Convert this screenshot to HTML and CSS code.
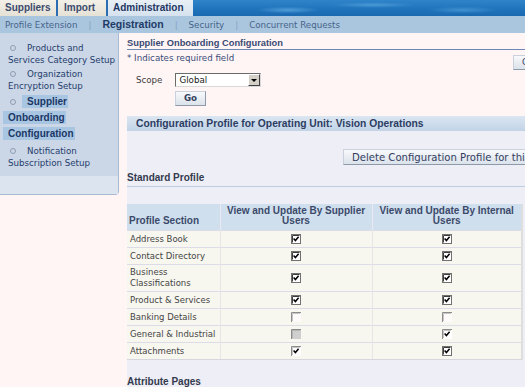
FILE: index.html
```html
<!DOCTYPE html>
<html lang="en">
<head>
<meta charset="utf-8">
<title>Supplier Onboarding Configuration</title>
<link rel="stylesheet" href="styles.css">
</head>
<body>
<svg class="defs" width="0" height="0" aria-hidden="true">
  <defs>
    <symbol id="cb-on" viewBox="0 0 10 10">
      <rect x="0.5" y="0.5" width="9" height="9" fill="#fff" stroke="#707070"/>
      <path d="M1.5 8.5V1.5h7" fill="none" stroke="#3c3c3c"/>
      <path d="M2.6 4.6l1.8 2 3.2-3.8" fill="none" stroke="#000" stroke-width="1.5"/>
    </symbol>
    <symbol id="cb-off" viewBox="0 0 10 10">
      <rect x="0" y="0" width="10" height="10" fill="#fffafa"/>
      <path d="M0.5 10V0.5H10" fill="none" stroke="#8c8c8c"/>
      <path d="M1.5 9V1.5H9" fill="none" stroke="#c4c4c4"/>
    </symbol>
    <symbol id="cb-dis" viewBox="0 0 10 10">
      <rect x="0" y="0" width="10" height="10" fill="#cfcfcf"/>
      <path d="M0.5 10V0.5H10" fill="none" stroke="#8c8c8c"/>
      <path d="M1.5 9V1.5H9" fill="none" stroke="#b4b4b4"/>
    </symbol>
    <symbol id="cb-don" viewBox="0 0 10 10">
      <rect x="0" y="0" width="10" height="10" fill="#fff"/>
      <path d="M0.5 10V0.5H10" fill="none" stroke="#8c8c8c"/>
      <path d="M1.5 9V1.5H9" fill="none" stroke="#c4c4c4"/>
      <path d="M2.6 4.6l1.8 2 3.2-3.8" fill="none" stroke="#000" stroke-width="1.5"/>
    </symbol>
  </defs>
</svg>

<header class="tabs">
  <div class="tab tab-suppliers">Suppliers</div>
  <div class="tab tab-import">Import</div>
  <div class="tab tab-admin">Administration</div>
  <div class="tab-fill"></div>
</header>

<nav class="subtabs">
  <span class="sub">Profile Extension</span><span class="sep">|</span><span class="sub sub-on">Registration</span><span class="sep">|</span><span class="sub">Security</span><span class="sep">|</span><span class="sub">Concurrent Requests</span>
</nav>

<div class="page">
  <aside class="side">
    <ul class="side-list">
      <li><span class="dot"></span>Products and Services Category Setup</li>
      <li><span class="dot"></span>Organization Encryption Setup</li>
      <li class="cur"><span class="dot"></span><span class="hl">Supplier Onboarding Configuration</span></li>
      <li><span class="dot"></span>Notification Subscription Setup</li>
    </ul>
    <div class="side-foot"></div>
  </aside>

  <main class="content">
    <h1 class="title">Supplier Onboarding Configuration</h1>
    <div class="req-row">
      <span class="req">* Indicates required field</span>
      <div class="top-btns">
        <button class="btn">Cancel</button>
        <button class="btn">Apply</button>
      </div>
    </div>
    <div class="scope-row">
      <span class="scope-label">Scope</span>
      <div class="select"><span class="select-val">Global</span><span class="select-arrow"><span class="tri"></span></span></div>
    </div>
    <div class="go-row"><button class="btn btn-go">Go</button></div>

    <section class="config">
      <h2 class="config-head">Configuration Profile for Operating Unit: Vision Operations</h2>
      <div class="delete-row"><button class="btn btn-wide">Delete Configuration Profile for this Operating Unit</button></div>
      <h3 class="sec-head">Standard Profile</h3>
      <table class="grid">
        <colgroup><col class="c1"><col class="c2"><col class="c3"></colgroup>
        <thead>
          <tr><th class="th-name">Profile Section</th><th>View and Update By Supplier Users</th><th>View and Update By Internal Users</th></tr>
        </thead>
        <tbody>
          <tr><td>Address Book</td><td class="ck"><svg class="cb"><use href="#cb-on"/></svg></td><td class="ck"><svg class="cb"><use href="#cb-on"/></svg></td></tr>
          <tr><td>Contact Directory</td><td class="ck"><svg class="cb"><use href="#cb-on"/></svg></td><td class="ck"><svg class="cb"><use href="#cb-on"/></svg></td></tr>
          <tr><td>Business Classifications</td><td class="ck"><svg class="cb"><use href="#cb-on"/></svg></td><td class="ck"><svg class="cb"><use href="#cb-on"/></svg></td></tr>
          <tr><td>Product &amp; Services</td><td class="ck"><svg class="cb"><use href="#cb-on"/></svg></td><td class="ck"><svg class="cb"><use href="#cb-on"/></svg></td></tr>
          <tr><td>Banking Details</td><td class="ck"><svg class="cb"><use href="#cb-off"/></svg></td><td class="ck"><svg class="cb"><use href="#cb-off"/></svg></td></tr>
          <tr><td>General &amp; Industrial</td><td class="ck"><svg class="cb"><use href="#cb-dis"/></svg></td><td class="ck"><svg class="cb"><use href="#cb-don"/></svg></td></tr>
          <tr><td>Attachments</td><td class="ck"><svg class="cb"><use href="#cb-don"/></svg></td><td class="ck"><svg class="cb"><use href="#cb-on"/></svg></td></tr>
        </tbody>
      </table>
      <h3 class="sec-head sec-attr">Attribute Pages</h3>
    </section>
  </main>
</div>
</body>
</html>
```
FILE: styles.css
```css
* { box-sizing: border-box; }
html, body { margin: 0; padding: 0; }
body {
  width: 525px;
  height: 387px;
  overflow: hidden;
  background: #fff5f5;
  font-family: "DejaVu Sans", Verdana, sans-serif;
  font-size: 8.7px;
  color: #3d3d3d;
}
.defs { position: absolute; width: 0; height: 0; overflow: hidden; }

/* ---------- top tabs ---------- */
.tabs { display: flex; height: 16px; }
.tab {
  font-family: "Liberation Sans", Arial, sans-serif;
  font-weight: bold;
  font-size: 10px;
  line-height: 16px;
  color: #3b4b6e;
  background: linear-gradient(#f3f0e8, #e5e1d5);
  white-space: nowrap;
  flex: none;
}
.tab-suppliers { width: 56px; padding-left: 5px; }
.tab-import { width: 50px; padding-left: 6px; border-left: 2px solid #2b6db2; }
.tab-admin {
  width: 87px; padding-left: 5px;
  border-left: 2px solid #2b6db2;
  background: linear-gradient(#e9f0f6, #d5e2ee);
  color: #1f3662;
}
.tab-fill {
  flex: 1;
  background:
    radial-gradient(ellipse 45px 5px at 95px 10px, rgba(120, 190, 238, .55), transparent 70%),
    radial-gradient(ellipse 60px 4px at 180px 5px, rgba(120, 190, 238, .45), transparent 70%),
    radial-gradient(ellipse 50px 5px at 270px 10px, rgba(120, 190, 238, .4), transparent 70%),
    linear-gradient(180deg, #2f84c9 0%, #1f74bc 55%, #1a69b0 100%);
}

/* ---------- sub tabs ---------- */
.subtabs {
  height: 17px;
  line-height: 17px;
  background: #a9c6de;
  padding-left: 5px;
  color: #47648c;
  white-space: nowrap;
}
.sub-on {
  font-family: "Liberation Sans", Arial, sans-serif;
  font-weight: bold;
  font-size: 10.5px;
  color: #1f3a66;
}
.sep { color: #86a2c2; margin: 0 11px; }

/* ---------- page ---------- */
.page { display: flex; align-items: flex-start; }

.side {
  flex: none;
  width: 119px;
  background: #cbd6e6;
  border-right: 1px solid #a7bad1;
  border-bottom: 1px solid #a7bad1;
  border-bottom-right-radius: 4px;
  color: #25406d;
}
.side-list { list-style: none; margin: 0; padding: 9px 0 0; }
.side-list li { padding-left: 8px; line-height: 12px; margin-bottom: 2px; }
.side-list li.cur { padding-left: 3px; line-height: 16px; margin: 1px 0 3px; }
.dot {
  display: inline-block;
  width: 6px; height: 6px;
  border: 1px solid #8f9db2;
  border-radius: 50%;
  margin: 0 11px 1px 2px;
  vertical-align: middle;
}
.cur .dot { margin-left: 7px; margin-right: 6px; }
.hl {
  font-family: "Liberation Sans", Arial, sans-serif;
  font-weight: bold;
  font-size: 10px;
  color: #1b3766;
  background: #a8c6e2;
  padding: 1px 1px 1px 5px;
  -webkit-box-decoration-break: clone;
  box-decoration-break: clone;
}
.side-foot { height: 18px; margin-top: 7px; background: #dce4ef; }

/* ---------- content ---------- */
.content { flex: none; width: 500px; margin-left: 8px; padding-top: 4px; }

.title {
  margin: 0;
  font-family: "Liberation Sans", Arial, sans-serif;
  font-weight: bold;
  font-size: 9.3px;
  line-height: 12px;
  color: #3a4a72;
  border-bottom: 1px solid #6f87b4;
}
.req-row { display: flex; align-items: flex-start; justify-content: space-between; padding-right: 20px; }
.req { margin-top: 2px; line-height: 12px; color: #3a4c78; }
.top-btns { margin-top: 5px; display: flex; gap: 4px; }

.btn {
  font: inherit;
  margin: 0;
  height: 15px;
  padding: 0 8px;
  line-height: 13px;
  border: 1px solid;
  border-color: #c9d1dc #8e99aa #8e99aa #c9d1dc;
  background: linear-gradient(#f8f9fb, #dbe2ea);
  color: #33405f;
  white-space: nowrap;
}
.scope-row { display: flex; align-items: center; margin-top: 3px; padding-left: 9px; gap: 13px; }
.scope-label { color: #3d3d3d; }
.select {
  width: 86px; height: 14px;
  border: 1px solid;
  border-color: #6b6b6b #d8d8d8 #d8d8d8 #6b6b6b;
  background: #fff;
  display: flex;
  align-items: center;
  padding-left: 3px;
  color: #222;
}
.select-arrow {
  margin-left: auto;
  width: 12px; height: 12px;
  background: #d4d0c8;
  border: 1px solid;
  border-color: #fff #404040 #404040 #fff;
  display: flex; align-items: center; justify-content: center;
}
.tri { width: 0; height: 0; border-left: 3px solid transparent; border-right: 3px solid transparent; border-top: 3px solid #000; }

.go-row { margin-top: 4px; padding-left: 48px; }
.btn-go { width: 31px; padding: 0; font-weight: bold; }

.config { margin-top: 10px; background: #eeeef7; padding-bottom: 20px; }
.config-head {
  margin: 0;
  height: 15px;
  line-height: 15px;
  padding-left: 9px;
  font-family: "Liberation Sans", Arial, sans-serif;
  font-weight: bold;
  font-size: 10.3px;
  color: #2c3d63;
  background: linear-gradient(#dbe6f1, #c2d3e7);
  white-space: nowrap;
}
.delete-row { margin-top: 18px; padding-left: 216px; }
.btn-wide { height: 16px; font-size: 10.1px; padding: 0 8px; }

.sec-head {
  margin: 7px 0 0;
  font-family: "Liberation Sans", Arial, sans-serif;
  font-weight: bold;
  font-size: 10px;
  line-height: 12px;
  color: #333b4d;
  padding-bottom: 2px;
  border-bottom: 1px solid #bccde2;
}
.sec-attr { margin-top: 16px; }

.grid {
  margin-top: 17px;
  border-collapse: collapse;
  width: 395px;
  table-layout: fixed;
  background: #f7f6ef;
  font-size: 8.5px;
}
.c1 { width: 93px; }
.c2 { width: 152px; }
.c3 { width: 150px; }
.grid th {
  background: #d0dfee;
  color: #3b4a6a;
  font-family: "Liberation Sans", Arial, sans-serif;
  font-weight: bold;
  font-size: 10px;
  line-height: 10px;
  padding: 2px 4px 4px;
  height: 26px;
  vertical-align: middle;
  text-align: center;
  border-left: 1px solid #e9e9ef;
}
.grid th.th-name { text-align: left; vertical-align: bottom; padding-left: 2px; }
.grid td {
  height: 17px;
  line-height: 11px;
  padding: 2px 3px;
  vertical-align: middle;
  color: #454545;
  border-top: 1px solid #dcdce8;
  border-left: 1px solid #e6e6e6;
}
.grid td.ck { text-align: center; }
.grid tr > :first-child { border-left: 0; }
.grid tbody tr:last-child td { border-bottom: 1px solid #d6d6dc; }
.grid tr > :last-child { border-right: 2px solid #dedede; }
.cb { width: 10px; height: 10px; display: inline-block; vertical-align: middle; }
```
